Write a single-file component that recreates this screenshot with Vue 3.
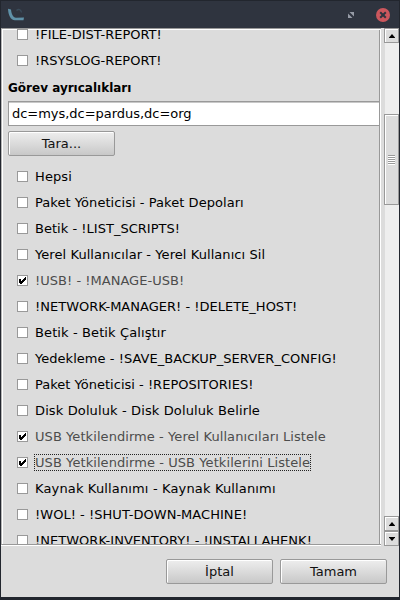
<script setup>
// extra: width in px spread over the label's letters, as the toolkit's whole-pixel advances do
const topTasks = [
  { label: '!FILE-DIST-REPORT!', extra: 0 },
  { label: '!RSYSLOG-REPORT!', extra: -0.5 }
]
const tasks = [
  { label: 'Hepsi', extra: 0.5 },
  { label: 'Paket Yöneticisi - Paket Depoları', extra: 1.8 },
  { label: 'Betik - !LIST_SCRIPTS!', extra: 0.5 },
  { label: 'Yerel Kullanıcılar - Yerel Kullanıcı Sil', extra: 2.8 },
  { label: '!USB! - !MANAGE-USB!', extra: 0.5, on: true },
  { label: '!NETWORK-MANAGER! - !DELETE_HOST!', extra: 0.3 },
  { label: 'Betik - Betik Çalıştır', extra: 2.5 },
  { label: 'Yedekleme - !SAVE_BACKUP_SERVER_CONFIG!', extra: 1.5 },
  { label: 'Paket Yöneticisi - !REPOSITORIES!', extra: 0.3 },
  { label: 'Disk Doluluk - Disk Doluluk Belirle', extra: 4.3 },
  { label: 'USB Yetkilendirme - Yerel Kullanıcıları Listele', extra: 3.2, on: true },
  { label: 'USB Yetkilendirme - USB Yetkilerini Listele', extra: 3.2, on: true, focus: true },
  { label: 'Kaynak Kullanımı - Kaynak Kullanımı', extra: 5.2 },
  { label: '!WOL! - !SHUT-DOWN-MACHINE!', extra: 1 },
  { label: '!NETWORK-INVENTORY! - !INSTALLAHENK!', extra: 1 }
]
const spacing = (t) => ({ letterSpacing: (t.extra / t.label.length).toFixed(4) + 'px' })
</script>

<template>
  <div class="window">
    <header class="titlebar">
      <svg class="logo" width="18" height="14" viewBox="0 0 18 14">
        <path d="M0 .8L3 1.500C3.500 6 5 9.600 8 9.800L16 9.600L15.500 12.300H7C2.500 12.300 .3 7 0 .8Z" fill="#5f91a8" />
        <path d="M8.500 2.500C10.500 .5 13 1.500 13.500 4.500" fill="none" stroke="#3a4b59" stroke-width="1.4" />
      </svg>
      <span class="spacer"></span>
      <svg class="max" width="6" height="6" viewBox="0 0 6 6">
        <path d="M1.500 0H6V4.500ZM0 1.500V6H4.500Z" fill="#969ba6" />
      </svg>
      <svg class="close" width="14" height="14" viewBox="0 0 14 14">
        <circle cx="7" cy="7" r="7" fill="#cc575d" />
        <path d="M4.200 4.200L9.800 9.800M9.800 4.200L4.200 9.800" stroke="#2f343f" stroke-width="2" />
      </svg>
    </header>
    <main class="main">
      <section class="panel">
        <div class="list first">
          <div v-for="t in topTasks" :key="t.label" class="row">
            <span class="box"></span><span class="label" :style="spacing(t)">{{ t.label }}</span>
          </div>
        </div>
        <div class="heading">Görev ayrıcalıkları</div>
        <div class="field">dc=mys,dc=pardus,dc=org</div>
        <button class="btn scan">Tara...</button>
        <div class="list">
          <div v-for="t in tasks" :key="t.label" class="row" :class="{ on: t.on, focus: t.focus }">
            <span class="box">
              <svg v-if="t.on" width="9" height="9" viewBox="0 0 9 9" shape-rendering="crispEdges">
                <path d="M1 3H3V5H4V4H5V3H6V2H7V1H8V4H7V5H6V6H5V7H4V8H2V7H1Z" fill="#000" />
              </svg>
            </span>
            <span class="label" :style="spacing(t)">{{ t.label }}</span>
          </div>
        </div>
      </section>
      <aside class="scroll">
        <div class="sb arrow"><svg width="6" height="4" viewBox="0 0 6 4"><path d="M3 0L6.500 4H-.5Z" /></svg></div>
        <div class="track"></div>
        <div class="sb thumb"><i v-for="n in 5" :key="n"></i></div>
        <div class="track grow"></div>
        <div class="sb arrow"><svg width="6" height="4" viewBox="0 0 6 4"><path d="M3 0L6.500 4H-.5Z" /></svg></div>
        <div class="sb arrow"><svg width="6" height="4" viewBox="0 0 6 4"><path d="M-.5 0H6.500L3 4Z" /></svg></div>
      </aside>
    </main>
    <footer class="footer">
      <button class="btn">İptal</button>
      <button class="btn">Tamam</button>
    </footer>
  </div>
</template>

<style>
body { margin: 0; overflow: hidden; }
</style>

<style scoped>
.window {
  box-sizing: border-box;
  width: 400px;
  height: 600px;
  display: flex;
  flex-direction: column;
  background: #dcdcdc;
  border: solid #22262e;
  border-width: 1px 1px 3px;
  font: 13px/16px "DejaVu Sans", sans-serif;
  color: #000;
}
.titlebar {
  flex: none;
  height: 27px;
  box-sizing: border-box;
  display: flex;
  align-items: center;
  padding: 0 9px 0 7px;
  background: #2f343f;
}
.spacer { flex: 1; }
.max { margin-right: 22px; }
.main {
  flex: none;
  height: 518px;
  display: flex;
  justify-content: space-between;
  align-items: flex-start;
}
.panel {
  box-sizing: border-box;
  width: 380px;
  height: 517px;
  overflow: hidden;
  border: 1px solid #999;
  border-left-color: #b4b4b4;
  border-right: 0;
  box-shadow: inset 1px 1px #fff, inset -1px 0 #fff, inset -2px 0 #999, 0 1px #fff;
  padding: 0 2px 0 6px;
}
.row {
  height: 26px;
  display: flex;
  align-items: center;
  padding-left: 9px;
}
.first { margin-top: -8px; }
.box {
  box-sizing: border-box;
  width: 11px;
  height: 11px;
  border: 1px solid #999;
  background: #fff;
  flex: none;
}
.box svg { display: block; }
.label { margin: 2px 0 0 7px; white-space: nowrap; line-height: 16px; }
.on .label { color: #4c4c4c; }
.focus .label { outline: 1px dotted #222; height: 15px; margin-top: 1px; }
.heading { font-size: 12px; font-weight: bold; height: 28px; line-height: 28px; padding-top: 1px; box-sizing: border-box; }
.field {
  box-sizing: border-box;
  height: 25px;
  border: 1px solid #999;
  border-right: 0;
  background: #fff;
  box-shadow: inset 0 1px #c8c8c8;
  padding: 0 3px;
  line-height: 23px;
  letter-spacing: -0.03px;
}
.btn {
  box-sizing: border-box;
  display: block;
  width: 107px;
  height: 25px;
  padding: 0;
  border: 1px solid #999;
  border-radius: 2px;
  background: linear-gradient(#eee, #c8c8c8);
  box-shadow: inset 1px 1px #fff;
  font: inherit;
  color: #111;
}
.scan { margin: 5px 0 7px; }
.scroll {
  width: 15px;
  height: 518px;
  display: flex;
  flex-direction: column;
}
.sb {
  box-sizing: border-box;
  border: 1px solid #999;
  background: #dcdcdc;
  box-shadow: inset 1px 1px #fff;
  flex: none;
  display: flex;
  align-items: center;
  justify-content: center;
}
.arrow { height: 15px; }
.thumb { height: 91px; flex-direction: column; }
.thumb i { width: 7px; height: 1px; background: #999; border-bottom: 1px solid #fff; }
.track { height: 71px; background: #eee; margin-left: 1px; }
.grow { height: auto; flex: 1; }
.footer {
  display: flex;
  justify-content: flex-end;
  gap: 7px;
  padding: 13px 12px 0 0;
}
</style>
